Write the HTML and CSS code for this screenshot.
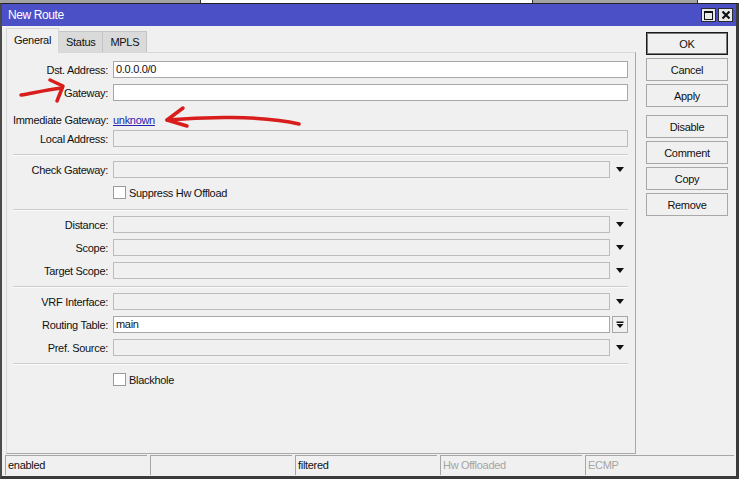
FILE: index.html
```html
<!DOCTYPE html>
<html lang="en">
<head>
    <meta charset="UTF-8">
    <title>New Route</title>
    <link rel="stylesheet" href="styles.css">
</head>
<body>
    <div class="desktop">
        <span class="desk gray-a"></span>
        <span class="desk white-a"></span>
        <span class="desk gray-b"></span>
        <span class="desk white-b"></span>
    </div>

    <div class="window">
        <div class="titlebar">
            <span class="title">New Route</span>
            <div class="tb-buttons">
                <span class="tb-btn"><span class="max-icon"></span></span>
                <span class="tb-btn">
                    <svg width="10" height="10" viewBox="0 0 10 10"><path d="M1.5 1.5 L8.5 8.5 M8.5 1.5 L1.5 8.5" stroke="#111" stroke-width="2.2"/></svg>
                </span>
            </div>
        </div>

        <div class="content">
            <div class="left">
                <div class="tabs">
                    <div class="tab active">General</div>
                    <div class="tab">Status</div>
                    <div class="tab">MPLS</div>
                </div>
                <div class="panel">
                    <div class="section first">
                        <div class="row">
                            <label>Dst. Address:</label>
                            <div class="field">0.0.0.0/0</div>
                        </div>
                        <div class="row">
                            <label>Gateway:</label>
                            <div class="field"></div>
                        </div>
                        <div class="row info">
                            <label>Immediate Gateway:</label>
                            <a class="link" href="#">unknown</a>
                        </div>
                        <div class="row">
                            <label>Local Address:</label>
                            <div class="field disabled"></div>
                        </div>
                    </div>
                    <div class="sep"></div>

                    <div class="section">
                        <div class="row">
                            <label>Check Gateway:</label>
                            <div class="field disabled"></div>
                            <span class="drop"><span class="arrow"></span></span>
                        </div>
                        <div class="check-row">
                            <span class="checkbox"></span>
                            <span>Suppress Hw Offload</span>
                        </div>
                    </div>
                    <div class="sep"></div>

                    <div class="section">
                        <div class="row">
                            <label>Distance:</label>
                            <div class="field disabled"></div>
                            <span class="drop"><span class="arrow"></span></span>
                        </div>
                        <div class="row">
                            <label>Scope:</label>
                            <div class="field disabled"></div>
                            <span class="drop"><span class="arrow"></span></span>
                        </div>
                        <div class="row">
                            <label>Target Scope:</label>
                            <div class="field disabled"></div>
                            <span class="drop"><span class="arrow"></span></span>
                        </div>
                    </div>
                    <div class="sep"></div>

                    <div class="section">
                        <div class="row">
                            <label>VRF Interface:</label>
                            <div class="field disabled"></div>
                            <span class="drop"><span class="arrow"></span></span>
                        </div>
                        <div class="row">
                            <label>Routing Table:</label>
                            <div class="field">main</div>
                            <span class="drop">
                                <span class="drop-btn">
                                    <svg width="8" height="8" viewBox="0 0 8 8"><rect x="0.5" y="0.5" width="7" height="1.5" fill="#111"/><path d="M0.5 3 L7.5 3 L4 7 Z" fill="#111"/></svg>
                                </span>
                            </span>
                        </div>
                        <div class="row">
                            <label>Pref. Source:</label>
                            <div class="field disabled"></div>
                            <span class="drop"><span class="arrow"></span></span>
                        </div>
                    </div>
                    <div class="sep"></div>

                    <div class="section last">
                        <div class="check-row">
                            <span class="checkbox"></span>
                            <span>Blackhole</span>
                        </div>
                    </div>
                </div>
            </div>

            <div class="buttons">
                <button class="default">OK</button>
                <button>Cancel</button>
                <button>Apply</button>
                <button class="spaced">Disable</button>
                <button>Comment</button>
                <button>Copy</button>
                <button>Remove</button>
            </div>
        </div>

        <div class="statusbar">
            <div class="cell">enabled</div>
            <div class="cell"></div>
            <div class="cell">filtered</div>
            <div class="cell muted">Hw Offloaded</div>
            <div class="cell muted wide">ECMP</div>
        </div>
    </div>

    <!-- hand drawn red arrows on top of the dialog -->
    <svg class="annot" width="739" height="479" viewBox="0 0 739 479">
        <g fill="none" stroke="#d91d1d" stroke-width="3.5" stroke-linecap="round" stroke-linejoin="round">
            <path d="M21 95 C 33 93, 46 90, 62 88"/>
            <path d="M50 80 L63 86 L57 101"/>
            <path d="M167 120 C 200 117, 262 115, 299 124"/>
            <path d="M183 108 L167 120 L187 126"/>
        </g>
    </svg>
</body>
</html>
```

FILE: styles.css
```css
* {
    margin: 0;
    padding: 0;
    box-sizing: border-box;
}

body {
    width: 739px;
    height: 479px;
    overflow: hidden;
    position: relative;
    background: #ffffff;
    font-family: "Liberation Sans", Arial, sans-serif;
    font-size: 11px;
    letter-spacing: -0.3px;
    color: #111;
}

/* strip of the desktop behind the window */
.desktop {
    display: flex;
    height: 3px;
}

.desk {
    height: 3px;
}

.gray-a {
    width: 201px;
    background: #a3a3a3;
    border-right: 1px solid #333;
}

.white-a {
    width: 332px;
    background: #fff;
    border-right: 1px solid #333;
}

.gray-b {
    width: 165px;
    background: #a3a3a3;
    border-right: 1px solid #333;
}

.white-b {
    flex: 1;
    background: #fff;
}

/* dialog window */
.window {
    height: 476px;
    display: flex;
    flex-direction: column;
    background: #f0f0f0;
    border-top: 1px solid #222;
    border-left: 2px solid #4a4a4a;
    border-right: 3px solid #3a3a3a;
    border-bottom: 3px solid #3a3a3a;
}

.titlebar {
    height: 22px;
    flex-shrink: 0;
    display: flex;
    align-items: center;
    justify-content: space-between;
    background: #4c50c7;
    padding: 0 3px 0 6px;
}

.title {
    color: #fff;
    font-size: 12px;
    letter-spacing: -0.4px;
}

.tb-buttons {
    display: flex;
    gap: 2px;
}

.tb-btn {
    width: 15px;
    height: 14px;
    background: #e9e9e9;
    border: 1px solid #2b2b2b;
    display: flex;
    align-items: center;
    justify-content: center;
}

.max-icon {
    width: 9px;
    height: 9px;
    border: 1px solid #111;
    border-top-width: 2px;
}

.content {
    flex: 1;
    display: flex;
    padding: 2px 8px 0 4px;
}

.left {
    width: 630px;
    display: flex;
    flex-direction: column;
}

.tabs {
    display: flex;
    height: 24px;
    position: relative;
    z-index: 1;
}

.tab {
    height: 21px;
    margin-top: 3px;
    padding: 0 7px;
    display: flex;
    align-items: center;
    background: #dadada;
    border: 1px solid #c4c4c4;
    border-bottom: none;
}

.tab + .tab {
    margin-left: -1px;
}

.tab.active {
    height: 25px;
    margin-top: 0;
    padding: 0 7px 2px;
    background: #f0f0f0;
    border-color: #d6d6d6;
    position: relative;
    z-index: 2;
}

.panel {
    flex: 1;
    border: 1px solid #d8d8d8;
    border-right-color: #a9a9a9;
    border-bottom-color: #a9a9a9;
    padding: 8px 7px 0 6px;
}

.section {
    display: flex;
    flex-direction: column;
    gap: 6px;
    padding: 5px 0 7px;
}

.section.first {
    padding-top: 0;
}

.row {
    display: flex;
    align-items: center;
    height: 17px;
}

.row label {
    width: 95px;
    margin-right: 5px;
    text-align: right;
    white-space: nowrap;
}

.row.info {
    margin: 4px 0 -4px;
}

.field {
    flex: 1;
    height: 17px;
    background: #fff;
    border: 1px solid #a8a8a8;
    padding: 0 2px;
    line-height: 15px;
}

.field.disabled {
    background: #f0f0f0;
    border-color: #bcbcbc;
}

.drop {
    width: 18px;
    height: 17px;
    display: flex;
    align-items: center;
    justify-content: center;
    padding-left: 2px;
}

.arrow {
    width: 0;
    height: 0;
    border-left: 4px solid transparent;
    border-right: 4px solid transparent;
    border-top: 5px solid #111;
}

.drop-btn {
    width: 16px;
    height: 17px;
    border: 1px solid #a8a8a8;
    background: #f0f0f0;
    display: flex;
    align-items: center;
    justify-content: center;
}

.link {
    color: #2424b4;
    text-decoration: underline;
}

.check-row {
    display: flex;
    align-items: center;
    gap: 3px;
    height: 13px;
    margin: 2px 0 3px 100px;
}

.section.last .check-row {
    margin-top: 3px;
}

.checkbox {
    width: 13px;
    height: 13px;
    background: #fff;
    border: 1px solid #9a9a9a;
}

.sep {
    height: 2px;
    border-top: 1px solid #cdcdcd;
    border-bottom: 1px solid #fafafa;
}

.buttons {
    width: 82px;
    margin-left: 10px;
    padding-top: 4px;
    display: flex;
    flex-direction: column;
    gap: 3px;
}

button {
    height: 23px;
    background: #f0f0f0;
    border: 1px solid #a8a8a8;
    font-family: inherit;
    font-size: 11px;
    letter-spacing: -0.3px;
    color: #111;
}

button.default {
    border: 1px solid #1a1a1a;
    box-shadow: inset 0 0 0 1px #7a7a7a;
}

button.spaced {
    margin-top: 5px;
}

.statusbar {
    height: 22px;
    flex-shrink: 0;
    display: flex;
    gap: 3px;
    padding: 1px 2px 1px 3px;
}

.cell {
    width: 142px;
    height: 20px;
    border-top: 1px solid #a6a6a6;
    border-left: 1px solid #a6a6a6;
    padding-left: 2px;
    line-height: 19px;
}

.cell.wide {
    flex: 1;
}

.cell.muted {
    color: #a4a4a4;
}

.annot {
    position: absolute;
    left: 0;
    top: 0;
    pointer-events: none;
}
```
